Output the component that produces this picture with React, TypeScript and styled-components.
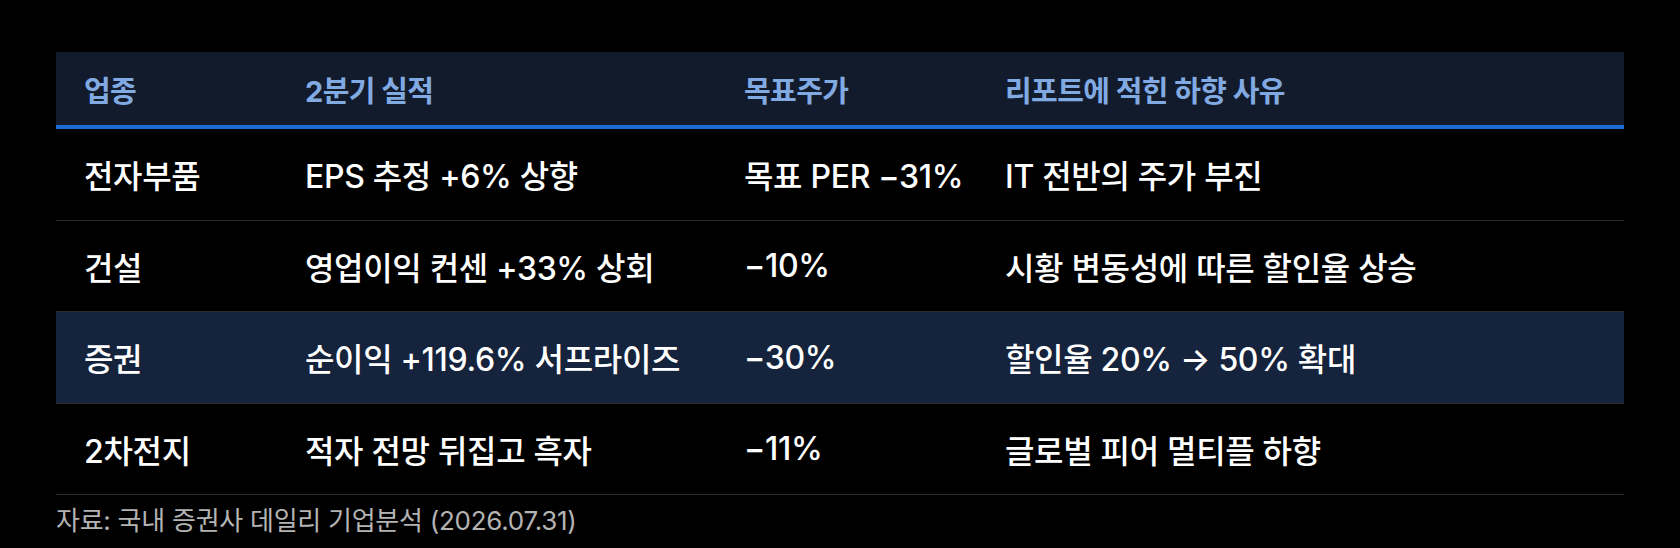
import React from 'react';
import styled, { createGlobalStyle } from 'styled-components';

const GlobalStyle = createGlobalStyle`
  html, body {
    margin: 0;
    padding: 0;
    background: #000000;
  }
  body {
    font-family: Inter, "Noto Sans CJK KR", "Noto Sans", sans-serif;
    -webkit-font-smoothing: antialiased;
  }
`;

type RowData = {
    sector: string,
    earnings: string,
    target: string,
    reason: string,
    highlight?: boolean
}

const rows: RowData[] = [
    { sector: '전자부품', earnings: 'EPS 추정 +6% 상향', target: '목표 PER −31%', reason: 'IT 전반의 주가 부진' },
    { sector: '건설', earnings: '영업이익 컨센 +33% 상회', target: '−10%', reason: '시황 변동성에 따른 할인율 상승' },
    { sector: '증권', earnings: '순이익 +119.6% 서프라이즈', target: '−30%', reason: '할인율 20% → 50% 확대', highlight: true },
    { sector: '2차전지', earnings: '적자 전망 뒤집고 흑자', target: '−11%', reason: '글로벌 피어 멀티플 하향' },
];

const Page = styled.div`
    padding: 52px 56px 0;
    box-sizing: border-box;
    width: 1680px;
    height: 548px;
    background: #000000;
`

const Table = styled.div`
    display: flex;
    flex-direction: column;
    width: 100%;
`

const columns = '221px 439px 261px 1fr';

const HeaderRow = styled.div`
    display: grid;
    grid-template-columns: ${columns};
    height: 77px;
    box-sizing: border-box;
    background-color: #121b2b;
    border-bottom: 4px solid #1f6bd6;
`

const HeaderCell = styled.div`
    display: flex;
    align-items: center;
    padding-left: 28px;
    color: #82aae2;
    font-size: 29px;
    font-weight: 700;
    letter-spacing: -0.02em;
    white-space: nowrap;
`

const BodyRow = styled.div<{ $highlight?: boolean }>`
    display: grid;
    grid-template-columns: ${columns};
    height: 91.5px;
    box-sizing: border-box;
    background-color: ${props => props.$highlight ? '#15233c' : 'transparent'};
    border-bottom: 1px solid #2c2c2c;
`

const Cell = styled.div`
    display: flex;
    align-items: center;
    padding-left: 28px;
    color: #ffffff;
    font-size: 32px;
    font-weight: 500;
    letter-spacing: -0.01em;
    white-space: nowrap;
`

const Source = styled.p`
    margin: 0;
    padding-top: 5px;
    color: #b4b4b4;
    font-size: 26px;
    font-weight: 400;
    letter-spacing: -0.01em;
`

const App = () => {
    return (
        <Page>
            <GlobalStyle />
            <Table>
                <HeaderRow>
                    <HeaderCell>업종</HeaderCell>
                    <HeaderCell>2분기 실적</HeaderCell>
                    <HeaderCell>목표주가</HeaderCell>
                    <HeaderCell>리포트에 적힌 하향 사유</HeaderCell>
                </HeaderRow>
                {rows.map(row => (
                    <BodyRow key={row.sector} $highlight={row.highlight}>
                        <Cell>{row.sector}</Cell>
                        <Cell>{row.earnings}</Cell>
                        <Cell>{row.target}</Cell>
                        <Cell>{row.reason}</Cell>
                    </BodyRow>
                ))}
            </Table>
            <Source>자료: 국내 증권사 데일리 기업분석 (2026.07.31)</Source>
        </Page>
    )
}

export default App
